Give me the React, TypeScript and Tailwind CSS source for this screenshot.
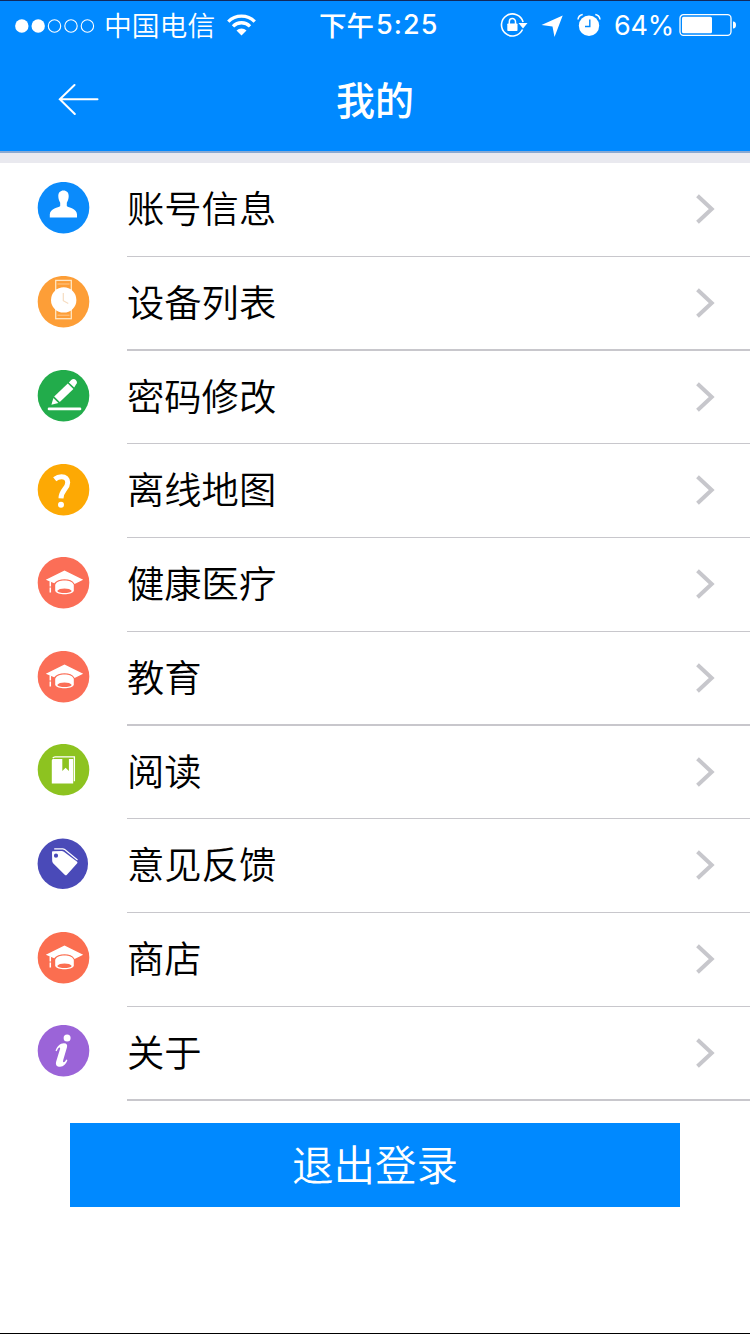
import type { ReactNode } from "react";

function UserIcon() {
  return (
    <path
      fill="#fff"
      d="M26 8.800c3.300 0 5.200 2.200 5.200 5.600c0 3-.9 5-1.900 6.600v3.200c1.700 2 9.800 2 10.200 8.300v3.200H12.300v-3.200c.4-6.300 8.700-6.300 10.400-8.300V21c-1-1.600-1.900-3.600-1.900-6.600c0-3.400 1.900-5.600 5.200-5.600z"
    />
  );
}

function WatchIcon() {
  return (
    <>
      <rect x="18.200" y="4.700" width="15.600" height="38.300" fill="none" stroke="#ffe6c4" strokeWidth="1.300" />
      <path d="M20 8.300h12M20 39.500h12" stroke="#ffc78a" strokeWidth="1" />
      <circle cx="26.200" cy="24.200" r="12.700" fill="#fff" />
      <path d="M25.800 17.200V25l5 2.800" fill="none" stroke="#f6dcc0" strokeWidth="1.200" />
    </>
  );
}

function PencilIcon() {
  return (
    <>
      <path d="M11.500 39.200h31" stroke="#fff" strokeWidth="2.600" strokeLinecap="round" />
      <path fill="#fff" d="M30.300 13.800l5.600 5.600l-13.600 13l-5.600-5.600z" />
      <path fill="#fff" d="M15.900 28.300l5 5l-7 1.700z" />
      <path fill="#fff" d="M31.400 12.700l2.300-2.300c1.500-1.500 3.400-1.300 4.600-.1c1.500 1.500 1.600 3.200.2 4.600l-1.800 2.800z" />
    </>
  );
}

function QuestionIcon() {
  return (
    <>
      <path
        d="M17.200 15.500C19.200 13.900 21.500 13 24 13C28 13 30.200 15.200 30.200 18.700C30.200 25.200 23.700 26 23.500 34.700"
        fill="none"
        stroke="#fff"
        strokeWidth="5"
      />
      <circle cx="23.500" cy="41" r="3" fill="#fff" />
    </>
  );
}

function CapIcon() {
  return (
    <>
      <path
        fill="#fff"
        d="M27 13.700L45.700 23l-8.600 4.200c-1.800-3.300-5.500-4.700-10.100-4.700c-4.500 0-8.200 1.100-10.300 4.100L8.300 23z"
      />
      <path
        fill="#fff"
        fillRule="evenodd"
        d="M17.700 28c1.300-3 4.900-4.200 9.300-4.200s8 1.200 9.300 4.200v6.300c-1.200 2.200-4.900 3.200-9.300 3.200s-8.100-1-9.300-3.200zM19.700 34.300c1 1.400 3.900 2 7.300 2s6.300-.6 7.300-2c-1-1.700-3.900-2.500-7.300-2.500s-6.300.8-7.300 2.500z"
      />
      <path d="M12.800 24.500v5.200M12.800 30.700v5" stroke="#fff" strokeWidth="1.500" />
    </>
  );
}

function BookIcon() {
  return (
    <>
      <path fill="#fff" d="M14.300 17c0-1.200.6-1.700 1.800-1.700h8.700v12l3.300-3.200l3.300 3.200v-12h4.300v24.400H14.300z" />
      <path d="M15.300 14.500c.6-1 1.200-1.300 2.300-1.300h19.300V37.500" fill="none" stroke="#fff" strokeWidth="1.300" />
    </>
  );
}

function TagIcon() {
  return (
    <>
      <path
        fill="#fff"
        fillRule="evenodd"
        d="M15.500 13.500l8.700-.2c.8 0 1.500.3 2.200.8l12.900 9.700c.8.600.8 1.300.2 2.100L29.400 37c-.7.800-1.400.8-2.200.1L15.600 25.500c-.6-.7-.9-1.300-.9-2.100l-.2-8.700c0-.8.300-1.200 1-1.200zM18.500 15.900a2.100 2.100 0 1 0 0 4.200a2.100 2.100 0 1 0 0-4.200z"
      />
      <path d="M16.700 11.200h8.500c.8 0 1.300.2 2 .7L40 22.300" fill="none" stroke="#fff" strokeWidth="1.200" />
    </>
  );
}

function InfoIcon() {
  return (
    <>
      <circle cx="29.600" cy="13.300" r="3.500" fill="#fff" />
      <path
        fill="#fff"
        d="M18 26C19.500 22 22.400 18.600 26.400 18.600c2.900 0 3.800 1.700 3 4.300l-3.600 12.100c-.5 1.800-.3 2.500.3 2.500c.9 0 1.900-1.100 2.700-2.700l1.100.6c-1.300 3.900-3.700 6.700-7.300 6.700c-3.500 0-4.800-2.200-3.900-5.400l3.800-12.400c.3-1.100.1-1.600-.4-1.600c-.9 0-2 1.600-2.900 3.800z"
      />
    </>
  );
}

type Item = { label: string; color: string; icon: ReactNode; row: string; iconPad: string; small?: boolean };

const thin = "h-[94px] border-b";
const short = "h-[93px] border-b";
const thick = "h-[94px] border-b-2";

const items: Item[] = [
  { label: "账号信息", color: "#0b8bfb", icon: <UserIcon />, row: thin, iconPad: "pt-[19px]" },
  { label: "设备列表", color: "#fd9e37", icon: <WatchIcon />, row: thick, iconPad: "pt-[19px]" },
  { label: "密码修改", color: "#22ac4b", icon: <PencilIcon />, row: short, iconPad: "pt-[19px]" },
  { label: "离线地图", color: "#fda904", icon: <QuestionIcon />, row: thin, iconPad: "pt-5" },
  { label: "健康医疗", color: "#fb6e57", icon: <CapIcon />, row: thin, iconPad: "pt-[19px]" },
  { label: "教育", color: "#fb6e57", icon: <CapIcon />, row: thick, iconPad: "pt-[19px]" },
  { label: "阅读", color: "#8dc320", icon: <BookIcon />, row: short, iconPad: "pt-[18px]" },
  { label: "意见反馈", color: "#4a4ab8", icon: <TagIcon />, row: thin, iconPad: "pt-[19px]", small: true },
  { label: "商店", color: "#fb6e50", icon: <CapIcon />, row: thin, iconPad: "pt-[19px]" },
  { label: "关于", color: "#9b64d8", icon: <InfoIcon />, row: thick, iconPad: "pt-[18px]" },
];

function MenuRow({ item }: { item: Item }) {
  return (
    <li className="flex">
      <div className={`w-[127px] shrink-0 pl-[37px] ${item.iconPad}`}>
        <svg width="53" height="52" viewBox="-0.5 0.300 53 52">
          <circle cx={item.small ? 25.3 : 26} cy="26" r={item.small ? 25.2 : 25.8} fill={item.color} />
          {item.icon}
        </svg>
      </div>
      <div className={`flex flex-1 items-start justify-between border-[#c8c7cc] pr-[34px] ${item.row}`}>
        <span className="pt-[17px] text-[37.300px] leading-[54px] font-[350] text-black">{item.label}</span>
        <svg className="mt-[30px]" width="22" height="32" viewBox="0 0 22 32">
          <path d="M3.500 2.700L17.700 16L3.500 29.300" fill="none" stroke="#c7c7cc" strokeWidth="4" />
        </svg>
      </div>
    </li>
  );
}

function StatusBar() {
  return (
    <div className="grid h-[50px] grid-cols-[320px_180px_250px] items-center border-t border-[#10285c] text-white">
      <div className="flex items-center pl-[15px]">
        <svg width="82" height="16" viewBox="0 0 82 16">
          <circle cx="6.800" cy="8" r="6.700" fill="#fff" />
          <circle cx="23.200" cy="8" r="6.700" fill="#fff" />
          <g fill="none" stroke="#fff" strokeWidth="1.100">
            <circle cx="39.500" cy="8" r="6.200" />
            <circle cx="56" cy="8" r="6.200" />
            <circle cx="72.400" cy="8" r="6.200" />
          </g>
        </svg>
        <span className="-mt-[3px] ml-[7px] text-[27.800px] leading-[40px] font-[350]">中国电信</span>
        <svg className="-mt-[2px] ml-[12px]" width="30" height="22" viewBox="0 0 30 22">
          <g fill="none" stroke="#fff" strokeWidth="3.300">
            <path d="M1.300 7.600a18.600 18.600 0 0 1 26.400 0" />
            <path d="M6 12.300a12 12 0 0 1 17 0" />
          </g>
          <path fill="#fff" d="M14.500 21.500l-5-5a7.100 7.100 0 0 1 10 0z" />
        </svg>
      </div>
      <div className="-mt-[2px] flex items-center font-medium">
        <span className="-mt-px -ml-px text-[27.500px] leading-[40px]">下午</span>
        <span className="mt-px ml-[2px] font-['Inter',sans-serif] text-[27px] leading-[40px] tracking-[1.100px]">5:25</span>
      </div>
      <div className="flex items-center">
        <svg className="-mt-[2px]" width="28" height="28" viewBox="0 0 28 28">
          <path d="M22.500 18.500a11 11 0 1 1 .6-7.500" fill="none" stroke="#fff" strokeWidth="1.600" />
          <path d="M18.500 12h9l-4.500 5.600z" fill="#fff" />
          <rect x="7.300" y="12.500" width="10.200" height="7.600" rx="0.800" fill="#fff" />
          <path d="M9.300 13v-2.300a3.100 3.100 0 0 1 6.200 0V13" fill="none" stroke="#fff" strokeWidth="1.500" />
        </svg>
        <svg className="ml-[13px]" width="22" height="24" viewBox="0 0 22 24">
          <path d="M21.700 1.500L13.500 23l-2-10.500L.500 11z" fill="#fff" />
        </svg>
        <svg className="-mt-[2px] ml-[14px]" width="24" height="24" viewBox="0 0 24 24">
          <circle cx="12" cy="12.800" r="10.200" fill="#fff" />
          <path d="M1 6.500c.3-2.800 2-4.500 4.700-5M23 6.500c-.3-2.800-2-4.500-4.700-5" fill="none" stroke="#fff" strokeWidth="1.500" />
          <path d="M12.800 6.500v7H8" fill="none" stroke="#0089ff" strokeWidth="1.400" />
        </svg>
        <span className="ml-[13px] w-[65px] font-['Inter',sans-serif] text-[27px] leading-[40px] font-normal tracking-[-0.200px] whitespace-nowrap">
          64%
        </span>
        <svg className="-mt-px" width="58" height="24" viewBox="0 0 58 24">
          <rect x="1" y="1.700" width="51" height="20.600" rx="3.500" fill="none" stroke="#fff" strokeWidth="1.300" />
          <rect x="3" y="3.700" width="30" height="16.600" rx="1.500" fill="#fff" />
          <path d="M54 8.500c2.200 0 3 1.500 3 3.500s-.8 3.500-3 3.500z" fill="#fff" />
        </svg>
      </div>
    </div>
  );
}

export default function App() {
  return (
    <main className="flex h-[1334px] w-[750px] flex-col border-b border-black bg-white font-['Noto_Sans_CJK_SC',sans-serif]">
      <header className="h-[153px] shrink-0 border-b-2 border-[#8aa9d2] bg-[#0089ff]">
        <StatusBar />
        <div className="grid h-[100px] grid-cols-[250px_250px_250px] items-center text-white">
          <svg className="-mt-[3px] ml-[58px]" width="42" height="32" viewBox="0 0 42 32">
            <path
              d="M39.500 16.300H1.800M16.500 2L1.800 16.300L16.800 31"
              fill="none"
              stroke="#fff"
              strokeWidth="2"
              strokeLinecap="round"
            />
          </svg>
          <h1 className="-mt-[5px] text-center text-[39px] leading-[56px] font-medium">我的</h1>
        </div>
      </header>
      <div className="h-[10px] shrink-0 bg-[#e9e9ef]" />
      <ul>
        {items.map((item) => (
          <MenuRow key={item.label} item={item} />
        ))}
      </ul>
      <button className="mx-[70px] mt-[22px] h-[84px] shrink-0 bg-[#0089ff] pb-[4px] text-[41.500px] leading-[80px] font-[350] text-white">
        退出登录
      </button>
    </main>
  );
}
